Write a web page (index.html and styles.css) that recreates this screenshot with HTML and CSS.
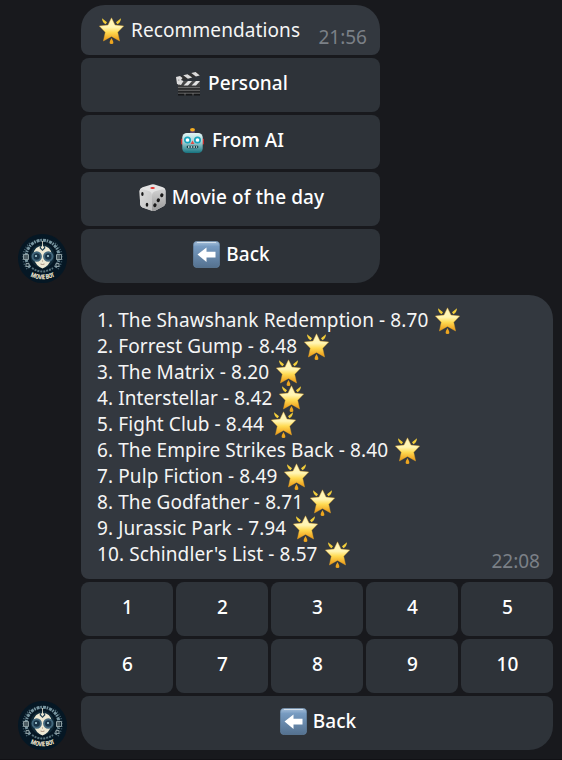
FILE: index.html
```html
<!DOCTYPE html>
<html lang="en">
<head>
<meta charset="utf-8">
<title>Movie Bot</title>
<link rel="stylesheet" href="styles.css">
</head>
<body>
<svg class="sprites" aria-hidden="true">
  <defs>
    <linearGradient id="gold" x1="0" y1="0" x2="0" y2="1"><stop offset="0" stop-color="#fff6bd"/><stop offset=".4" stop-color="#fff5b4"/><stop offset=".62" stop-color="#ffda52"/><stop offset="1" stop-color="#eb9412"/></linearGradient>
    <linearGradient id="blue" x1="0" y1="0" x2="0" y2="1"><stop offset="0" stop-color="#a9c2db"/><stop offset=".2" stop-color="#779bc1"/><stop offset="1" stop-color="#54718f"/></linearGradient>
    <linearGradient id="teal" x1="0" y1="0" x2="0" y2="1"><stop offset="0" stop-color="#e2f4f4"/><stop offset=".45" stop-color="#a3d3d7"/><stop offset="1" stop-color="#15727e"/></linearGradient>
    <linearGradient id="slate" x1="0" y1="0" x2="0" y2="1"><stop offset="0" stop-color="#505050"/><stop offset="1" stop-color="#111214"/></linearGradient>
    <linearGradient id="dieLeft" x1="0" y1="0" x2="1" y2="1"><stop offset="0" stop-color="#ddd"/><stop offset="1" stop-color="#c2c2c2"/></linearGradient>
    <linearGradient id="dieRight" x1="0" y1="0" x2="0" y2="1"><stop offset="0" stop-color="#d2d2d2"/><stop offset="1" stop-color="#9a9a9a"/></linearGradient>
    <path id="badge-arc" d="M7 39.500Q24.500 51 42 39.500"/>
  </defs>
  <symbol id="star" viewBox="0 0 27 27">
    <path fill="url(#gold)" stroke="#e5aa2c" stroke-width=".4" stroke-linejoin="round" d="M13.500.8 17 8.100l8.700.9-6 6.200 1.900 8.800-8.100-4.600L5.400 24l1.900-8.800-6-6.200 8.700-.9z"/>
    <path fill="#f2cd3a" d="M4 1.200 9 5.300 7.600 7.300Q4.300 5.500 4 1.200zM23 1.200 18 5.300l1.400 2Q22.700 5.500 23 1.200z"/>
    <path fill="#eda51f" d="M13.500 20.900q1.900 3 1.900 5.100 0 1-1.900 1t-1.900-1q0-2.100 1.900-5.100z"/>
  </symbol>
  <symbol id="clapper" viewBox="0 0 27 27">
    <path fill="#303030" d="m1 7.500 22.500-6.300 1.300 4.300L3 11.500z"/>
    <path fill="#dadada" d="M8.200 5.300l4.300-1.100 4.700 3.400-4.300 1.100zM16.300 3.100l4.300-1.100 4.200 3.500-3.900 1z"/>
    <path fill="url(#slate)" d="M3 11h22v14.500H3z"/>
    <path fill="#e4e4e4" d="M3 11h3L3 15zm10 0h4l-4 4.500H8.500zm8 0h4l-4 4.500h-4.500z"/>
    <path stroke="#777" stroke-width=".8" d="M3 17.500h22M3 20.300h22M3 23.200h22M10 23v2.500M18 23v2.500"/>
    <path fill="#ddd" d="M1 7 5 6l2.500 2L6 10l2.500 1L6 15l-4-1z"/><circle cx="3.800" cy="10" r=".6" fill="#666"/>
  </symbol>
  <symbol id="robot" viewBox="0 0 27 27">
    <path fill="#c92d2b" d="M2 12q3-2 3 1v4q0 2-3 0zM25 12q-3-2-3 1v4q0 2 3 0z"/>
    <path fill="#5c4a74" d="M11.200 4h4.600v3h-4.600z"/><ellipse cx="13.500" cy="2.700" rx="2.500" ry="1.700" fill="#f6ae20"/>
    <rect x="3.300" y="6" width="20.400" height="20" rx="4.500" fill="url(#teal)"/>
    <g fill="#fff" stroke="#19a4bd" stroke-width="1.700"><circle cx="8.500" cy="13" r="2.700"/><circle cx="18.500" cy="13" r="2.700"/></g>
    <path fill="#e24a45" d="m13.500 13.500 1.900 3.500h-3.800z"/>
    <path fill="#123f48" d="M8 18.700h11q1 2.300-1 2.600H9q-2-.3-1-2.600z"/><path stroke="#dcebed" stroke-width="1.500" d="M9 20h1.500m1.200 0h1.500m1.200 0h1.500m1.200 0h1"/>
  </symbol>
  <symbol id="die" viewBox="0 0 27 27">
    <path fill="#e4e4e4" d="M3.500 3.200 12.500.5q1.500-.4 3 0l8.500 2.700q2.500 1 2.500 3v13q-.3 2-2 3l-8 4.300q-1.500.8-3.200.1L3.500 23.500q-2-1-2.300-3L.5 7Q.6 4.300 3.500 3.200z"/>
    <path fill="url(#dieLeft)" d="M.6 7Q1 4.500 4 5.300l6.500 2q2.500 1 2.500 4V27L3.500 23.500q-2-1-2.300-3z"/>
    <path fill="url(#dieRight)" d="M13 11.500q0-3.200 3-4.200l7-2q3.300-.6 3.500 1.900v12q-.3 2-2 3l-8 4.300q-1.500.8-3.500.4z"/>
    <ellipse cx="13.600" cy="4.100" rx="2.300" ry="1" fill="#e5312d"/>
    <g fill="#191919"><ellipse cx="3.400" cy="10" rx="1.200" ry="1.900"/><ellipse cx="8" cy="20.800" rx="1.300" ry="2"/><ellipse cx="22.800" cy="11.300" rx="1.600" ry="2" transform="rotate(25 22.800 11.300)"/><ellipse cx="19.300" cy="16.300" rx="1.600" ry="2" transform="rotate(25 19.300 16.300)"/><ellipse cx="15.900" cy="21.300" rx="1.600" ry="2" transform="rotate(25 15.900 21.300)"/></g>
  </symbol>
  <symbol id="left" viewBox="0 0 27 27">
    <rect x=".3" y=".3" width="26.400" height="26.400" rx="4" fill="url(#blue)" stroke="#6484a5" stroke-width=".6"/>
    <path d="M4 1.500h19" stroke="#d2dfeb" stroke-width="1"/>
    <path fill="#fff" d="M4.500 13.500 13.500 6.500v4.300h9v5.800h-9v4.400z"/>
  </symbol>
  <symbol id="avatar" viewBox="0 0 49 49">
    <circle cx="24.500" cy="24.500" r="24.500" fill="#051724"/>
    <g fill="none" stroke="#7895a0">
      <path stroke-width="3" stroke-dasharray="3 .8 1.500 1" d="M12 33.500A16.500 16.500 0 1 1 37 33.500"/>
      <path stroke="#4d6976" stroke-width="1.500" stroke-dasharray="1 1.500" d="M9 35A19 19 0 0 1 13 8M40 35A19 19 0 0 0 36 8"/>
      <path stroke="#58737d" stroke-width="2" stroke-dasharray="2 1" d="M14 34q10 7 21 0"/>
    </g>
    <path stroke="#8c9da1" fill="#182c38" d="M5.500 20.500h5v5h-5zm33 0h5v5h-5zM8 29.500h3v3H8zm30 0h3v3h-3z"/>
    <path stroke="#b0b8b4" stroke-width=".7" d="M6 22h4M6 24h4m29-3v5m2-5v5"/>
    <circle cx="24.500" cy="22" r="12" fill="#102937"/>
    <path fill="#eee9d4" d="M24.500 12q8 0 9 8 0 9-6 13l-3 1.500-3-1.500q-6-4-6-13 1-8 9-8z"/>
    <path fill="#1c3c50" d="m24.500 17-3-3 1-2h4l1 2z"/><path fill="#eee9d4" d="m24.500 15.500-1.700-2L24.500 11l1.700 2.500z"/><path stroke="#eee9d4" stroke-width=".8" d="M24.500 7v5"/>
    <g fill="#193346" stroke="#42677c" stroke-width="2"><circle cx="18.700" cy="22.500" r="4.200"/><circle cx="30.300" cy="22.500" r="4.200"/></g>
    <path fill="#8cb0bc" d="M17 21h2v2h-2zm12 0h2v2h-2z"/>
    <path stroke="#9a8072" stroke-width=".9" fill="none" d="M22.500 30q2 1 4 0M24 27h1"/>
  </symbol>
</svg>
<main class="chat">
  <section class="message">
    <svg class="avatar" viewBox="0 0 49 49"><use href="#avatar"/><text class="badge-text"><textPath href="#badge-arc" startOffset="50%" text-anchor="middle">MOVIE BOT</textPath></text></svg>
    <div class="stack compact">
      <div class="bubble title"><p><svg class="emoji"><use href="#star"/></svg> Recommendations</p><time>21:56</time></div>
      <button><svg class="emoji"><use href="#clapper"/></svg> Personal</button>
      <button><svg class="emoji"><use href="#robot"/></svg> From AI</button>
      <button><svg class="emoji"><use href="#die"/></svg> Movie of the day</button>
      <button class="last"><svg class="emoji"><use href="#left"/></svg> Back</button>
    </div>
  </section>
  <section class="message">
    <svg class="avatar" viewBox="0 0 49 49"><use href="#avatar"/><text class="badge-text"><textPath href="#badge-arc" startOffset="50%" text-anchor="middle">MOVIE BOT</textPath></text></svg>
    <div class="stack">
      <div class="bubble movies">
        <div>
          <p>1. The Shawshank Redemption - 8.70 <svg class="emoji"><use href="#star"/></svg></p>
          <p>2. Forrest Gump - 8.48 <svg class="emoji"><use href="#star"/></svg></p>
          <p>3. The Matrix - 8.20 <svg class="emoji"><use href="#star"/></svg></p>
          <p>4. Interstellar - 8.42 <svg class="emoji"><use href="#star"/></svg></p>
          <p>5. Fight Club - 8.44 <svg class="emoji"><use href="#star"/></svg></p>
          <p>6. The Empire Strikes Back - 8.40 <svg class="emoji"><use href="#star"/></svg></p>
          <p>7. Pulp Fiction - 8.49 <svg class="emoji"><use href="#star"/></svg></p>
          <p>8. The Godfather - 8.71 <svg class="emoji"><use href="#star"/></svg></p>
          <p>9. Jurassic Park - 7.94 <svg class="emoji"><use href="#star"/></svg></p>
          <p>10. Schindler's List - 8.57 <svg class="emoji"><use href="#star"/></svg></p>
        </div>
        <time>22:08</time>
      </div>
      <div class="keys">
        <button>1</button><button>2</button><button>3</button><button>4</button><button>5</button>
        <button>6</button><button>7</button><button>8</button><button>9</button><button>10</button>
      </div>
      <button class="last"><svg class="emoji"><use href="#left"/></svg> Back</button>
    </div>
  </section>
</main>
</body>
</html>
```
FILE: styles.css
```css
* { box-sizing: border-box; }
body {
  margin: 0;
  height: 760px;
  overflow: hidden;
  background: #18191d;
  border-bottom: 1px solid #111115;
  font: 19px/26px "Noto Sans", sans-serif;
  color: #f5f5f5;
}
p { margin: 0; white-space: nowrap; letter-spacing: .1px; }
.sprites { position: absolute; width: 0; height: 0; }
.chat { display: flex; flex-direction: column; gap: 12px; padding: 5px 9px 0 18px; }
.message { display: flex; align-items: flex-end; gap: 14px; }
.avatar { width: 49px; height: 49px; flex: none; overflow: visible; }
.badge-text { font: 700 6.5px/1 "Open Sans", sans-serif; font-stretch: 75%; letter-spacing: -.3px; fill: #eee7d1; }
.stack { display: flex; flex-direction: column; gap: 3px; width: 472px; }
.compact { width: 299px; }
.bubble {
  display: flex;
  justify-content: space-between;
  align-items: flex-end;
  background: #33383f;
  border-radius: 24px 24px 8px 8px;
}
.title { height: 50px; padding: 0 13px 5px 16px; }
.title p { padding-bottom: 7px; }
.movies { height: 284px; padding: 0 13px 5px 16px; }
.movies p { height: 26px; }
.movies > div { padding-bottom: 7px; }
time { color: #7b8087; line-height: 26px; }
button {
  height: 54px;
  width: 100%;
  padding: 0 0 4px 1px;
  border: 0;
  border-radius: 8px;
  background: #2e3339;
  color: #fff;
  font: 500 19px/26px "Noto Sans", sans-serif;
  letter-spacing: .1px;
}
.last { border-radius: 8px 8px 24px 24px; }
.keys { display: grid; grid-template-columns: repeat(5, 1fr); gap: 3px; }
.emoji { width: 27px; height: 27px; margin: -8px 1px; vertical-align: 1px; }
```
